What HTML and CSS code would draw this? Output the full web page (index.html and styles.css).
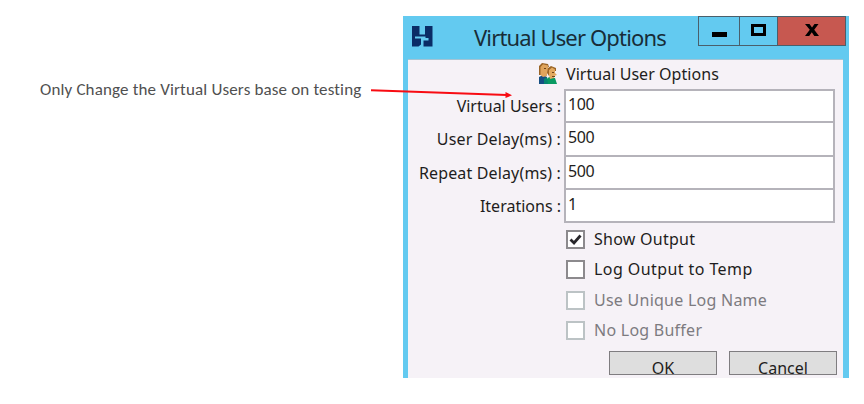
FILE: index.html
```html
<!DOCTYPE html>
<html lang="en">
<head>
<meta charset="utf-8">
<title>Virtual User Options</title>
<link rel="stylesheet" href="styles.css">
</head>
<body>
<main class="slide">
  <p class="note">Only Change the Virtual Users base on testing</p>
  <section class="window">
    <header class="titlebar">
      <svg class="logo" viewBox="0 0 21 21"><path fill="#0a2c66" d="M0 0H7.5V8.5H13V0H20.5V20.5H11.5V14.5H16.5V12H13.5V10.5H3V12.5H9V18.5L6.5 20.5H0Z"/></svg>
      <h1 class="title">Virtual User Options</h1>
      <div class="controls">
        <span class="control minimize"><i class="dash"></i></span>
        <span class="control maximize"><i class="box"></i></span>
        <span class="control close"><svg width="14" height="12" viewBox="0 0 14 12"><path d="M0 0H4.5L7 3.5L9.5 0H13.5L9.2 5.8L14 12H9.3L6.8 8.2L4.2 12H0L4.8 5.8Z"/></svg></span>
      </div>
    </header>
    <div class="client">
      <div class="heading">
        <svg class="people" viewBox="0 0 20 22"><path fill="#164f83" d="M1 21V14L5 12L9 14L10 21Z"/><path fill="#099a62" d="M8 21V17L11 14L17 15L19 21Z"/><path fill="#07856f" d="M6 16L9 14L10 21H6Z"/><path fill="#9a6427" d="M1 12V3L4 0L10 1L11 4L4 4L3 12Z"/><path fill="#dfa45d" d="M2.5 4L5 1.2L10 2.5V7L11 9L9 10V13L5 14L2.5 12Z"/><path fill="#9c6526" d="M10 5L13 3L18 5V8L12 8L11 13L9 10Z"/><path fill="#e3a960" d="M11 7L14 4.5L17 6.5V10L19 12L16 13V15L12 16L11 12Z"/><path fill="#70451b" d="M6 5H8V6H6ZM14 9H16V10H14ZM14 13H17V14H14Z"/></svg>
        <span class="heading-text">Virtual User Options</span>
      </div>
      <div class="fields">
        <label class="row"><span class="label">Virtual Users :</span><span class="input">100</span></label>
        <label class="row"><span class="label wide">User Delay(ms) :</span><span class="input">500</span></label>
        <label class="row"><span class="label wide">Repeat Delay(ms) :</span><span class="input">500</span></label>
        <label class="row"><span class="label">Iterations :</span><span class="input">1</span></label>
      </div>
      <div class="checks">
        <div class="check"><i class="tick"><svg viewBox="0 0 15 15"><path d="M2.5 7.5L6 11L12.5 3.5" fill="none" stroke="#28272b" stroke-width="2.8"/></svg></i><span>Show Output</span></div>
        <div class="check"><i class="tick"></i><span>Log Output to Temp</span></div>
        <div class="check off"><i class="tick"></i><span>Use Unique Log Name</span></div>
        <div class="check off"><i class="tick"></i><span>No Log Buffer</span></div>
      </div>
      <div class="buttons">
        <div class="button">OK</div>
        <div class="button">Cancel</div>
      </div>
    </div>
  </section>
  <svg class="arrow" viewBox="0 0 144 12"><path d="M0 2.2L136 7" stroke="#f80b12" stroke-width="1.9"/><path d="M134.5 4L141 7.3L134.5 10Z" fill="#f80b12"/></svg>
</main>
</body>
</html>
```
FILE: styles.css
```css
* { box-sizing: border-box; }
body { margin: 0; background: #fff; font-family: "Noto Sans", "Open Sans", sans-serif; }
.slide { position: relative; display: flex; align-items: flex-start; width: 864px; height: 404px; overflow: hidden; }
.note { width: 363px; margin: 79px 0 0 40px; font: 17px/22px Carlito, "Open Sans", sans-serif; color: #505050; white-space: nowrap; letter-spacing: .15px; }
.window { width: 446px; height: 362px; margin-top: 16px; padding: 0 6px 0 5px; background: #63caf0; }
.titlebar { display: flex; height: 43px; }
.logo { flex: none; width: 21px; height: 21px; margin: 10px 0 0 4px; }
.title { flex: none; width: 225px; margin: 4px 0 0 41px; font-size: 22px; line-height: 34px; font-weight: 400; color: #182d38; white-space: nowrap; letter-spacing: -.85px; }
.controls { display: flex; flex: none; width: 148px; height: 30px; margin-left: -1px; border: 1px solid #4a5f6b; }
.control { display: flex; align-items: center; justify-content: center; }
.minimize { width: 41px; border-right: 1px solid #4a5f6b; }
.maximize { width: 38px; border-right: 1px solid #4a5f6b; }
.close { width: 67px; background: #c75850; }
.dash { width: 15px; height: 5px; margin-top: 6px; background: #000; }
.box { width: 15px; height: 12px; margin-top: -2px; border: 3px solid #000; }
.close svg { margin-top: -2px; }
.client { height: 319px; background: #f6f2f7; border-top: 1px solid #a4c4d4; color: #1e1d20; font-size: 16px; }
.heading { display: flex; height: 29px; padding-left: 130px; }
.people { width: 20px; height: 22px; margin-top: 3px; }
.heading-text { margin-left: 8px; line-height: 28px; white-space: nowrap; letter-spacing: .05px; }
.fields { width: 427px; }
.row { display: flex; justify-content: flex-end; height: 33.4px; }
.label { margin-right: 3px; line-height: 34px; white-space: nowrap; }
.wide { letter-spacing: .15px; }
.input { width: 271px; padding-left: 2px; border: 2px solid #b5b3ba; border-bottom-width: 1px; border-top-width: 1px; background: #fff; line-height: 28px; letter-spacing: -.4px; }
.row:first-child .input { border-top-width: 2px; line-height: 27px; }
.row:last-child .input { border-bottom-width: 2px; }
.checks { padding: 5px 0 0 158px; }
.check { display: flex; align-items: center; height: 30.4px; white-space: nowrap; letter-spacing: .25px; }
.check:nth-child(2) { letter-spacing: .42px; }
.tick { width: 19px; height: 19px; margin: -7px 9px 0 0; border: 2px solid #8c8a8d; background: #fff; }
.tick svg { display: block; width: 15px; height: 15px; }
.check span { margin-top: -8px; }
.off { color: #7d7b80; }
.off .tick { border-color: #bcc3c5; }
.buttons { display: flex; gap: 12px; margin-top: 2px; padding-left: 201px; }
.button { width: 108px; height: 24px; overflow: hidden; border: 1.5px solid #7f7d80; background: #dedede; text-align: center; line-height: 33px; }
.arrow { position: absolute; left: 371px; top: 88px; width: 144px; height: 12px; }
```
